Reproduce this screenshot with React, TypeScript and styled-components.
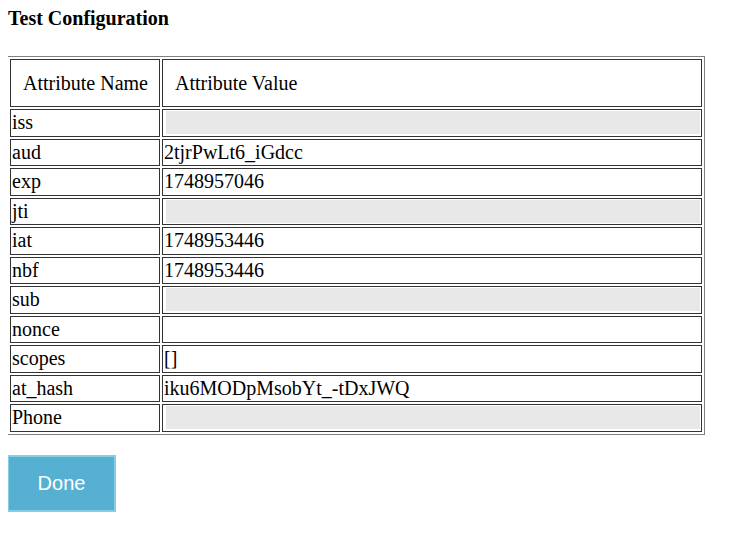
import React from "react";
import styled, { createGlobalStyle } from "styled-components";

const Global = createGlobalStyle`
  body { margin: 8px; font-family: "Liberation Serif", "Times New Roman", serif; color: #000; background: #fff; }
`;

const Title = styled.div`
  font-weight: bold;
  font-size: 20px;
  line-height: 21px;
  margin: 0 0 27px 0;
`;

const Table = styled.table`
  border: 1px solid #808080;
  border-collapse: separate;
  border-spacing: 2px;
  width: 698px;
  margin-left: -1px;
  font-size: 20px;
`;

const Th = styled.th`
  border: 1px solid #333;
  font-weight: normal;
  text-align: left;
  padding: 11.5px 10px 11.5px 12px;
  line-height: 23px;
`;

const Td = styled.td<{ $first?: boolean }>`
  border: 1px solid #333;
  padding: 1px 1px;
  height: 23.5px;
  line-height: 23px;
  width: ${(p) => (p.$first ? "146px" : "auto")};
`;

const Blank = styled.div`
  background: #e8e8e8;
  height: 23px;
  margin-left: 2px;
`;

const Button = styled.button`
  margin-top: 20px;
  margin-left: -1px;
  width: 109px;
  height: 57px;
  background: #56b0d1;
  border: 2px solid #86cde6;
  color: #fff;
  font-family: "Liberation Sans", Arial, sans-serif;
  font-size: 20px;
`;

const rows: [string, string | null][] = [
  ["iss", null],
  ["aud", "2tjrPwLt6_iGdcc"],
  ["exp", "1748957046"],
  ["jti", null],
  ["iat", "1748953446"],
  ["nbf", "1748953446"],
  ["sub", null],
  ["nonce", ""],
  ["scopes", "[]"],
  ["at_hash", "iku6MODpMsobYt_-tDxJWQ"],
  ["Phone", null],
];

export default function App() {
  return (
    <>
      <Global />
      <Title>Test Configuration</Title>
      <Table>
        <thead>
          <tr>
            <Th style={{ width: 126 }}>Attribute Name</Th>
            <Th>Attribute Value</Th>
          </tr>
        </thead>
        <tbody>
          {rows.map(([k, v]) => (
            <tr key={k}>
              <Td $first>{k}</Td>
              <Td>{v === null ? <Blank /> : v}</Td>
            </tr>
          ))}
        </tbody>
      </Table>
      <Button>Done</Button>
    </>
  );
}
